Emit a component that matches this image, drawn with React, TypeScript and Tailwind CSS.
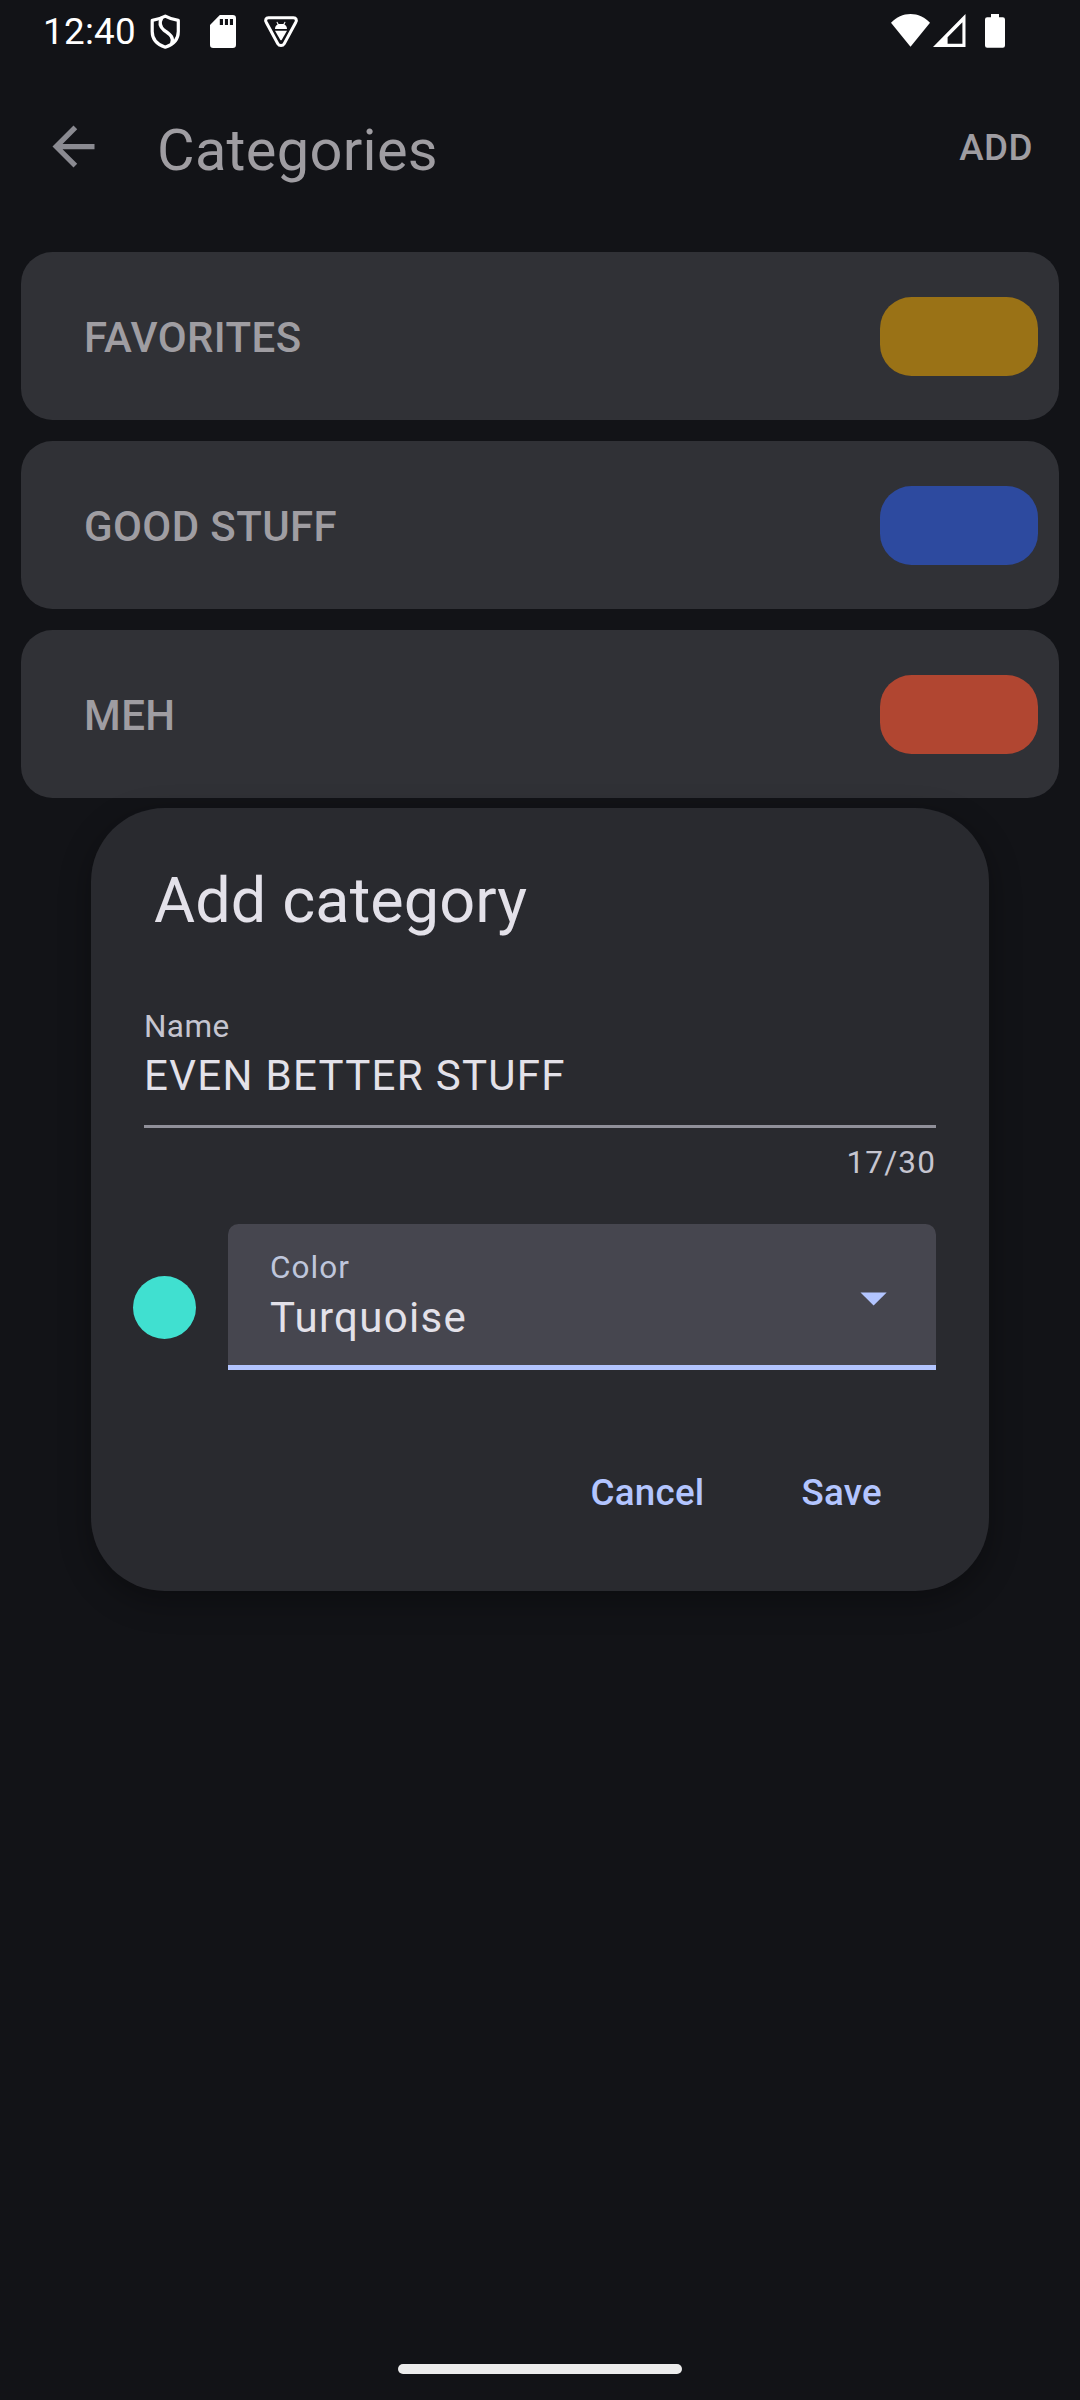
import type { ReactNode } from "react";

function ShieldIcon() {
  return (
    <svg className="h-[36px] w-[32px]" viewBox="0 0 32 36" fill="none" stroke="#fff" strokeLinejoin="round" strokeLinecap="round">
      <path d="M16.3 2.2 C12 4.6 7.5 5.9 3.2 6.4 V17.5 C3.2 25 8 30.6 16.3 33.2 C24.5 30.6 29.3 25 29.3 17.5 V6.4 C25 5.9 20.5 4.6 16.3 2.2 Z" strokeWidth="3.2" />
      <path d="M12.6 4.2 C10.2 8.5 10.5 12.5 15 16.2 C20.5 20.4 25 22.5 22.8 29" strokeWidth="3.4" />
    </svg>
  );
}

function SdCardIcon() {
  return (
    <svg className="h-[33px] w-[26px]" viewBox="0 0 26 33">
      <path
        fill="#fff"
        fillRule="evenodd"
        d="M9.8 0 H22.8 Q26 0 26 3.2 V29.8 Q26 33 22.8 33 H3.2 Q0 33 0 29.8 V9.9 Z M9.8 4 V10 H13 V4 Z M14.9 4 V10 H18 V4 Z M19.9 4 V10 H23 V4 Z"
      />
    </svg>
  );
}

function DebugTriangleIcon() {
  return (
    <svg className="h-[33px] w-[36px]" viewBox="0 0 36 33">
      <path d="M5.5 2.8 H30.5 C33.2 2.8 34 4.8 32.8 7.2 L21.2 28.8 C19.7 31.2 16.3 31.2 14.8 28.8 L3.2 7.2 C2 4.8 2.8 2.8 5.5 2.8 Z" fill="none" stroke="#fff" strokeWidth="3" />
      <path d="M12 14 C12 11.8 13 10.3 14.6 9.5 L13.4 7.1 L14.3 6.7 L15.6 9 H20.4 L21.7 6.7 L22.6 7.1 L21.4 9.5 C23 10.3 24 11.8 24 14 Z" fill="#fff" />
      <path d="M12 15.8 H24 L18.8 24.7 Q18 25.9 17.2 24.7 Z" fill="#fff" />
    </svg>
  );
}

function WifiIcon() {
  return (
    <svg className="h-[33px] w-[39px]" viewBox="0 0 39 33">
      <path fill="#fff" d="M19.5 32.8 L0 8.8 C5.5 3 12 0 19.5 0 C27 0 33.5 3 39 8.8 Z" />
    </svg>
  );
}

function SignalIcon() {
  return (
    <svg className="h-[33px] w-[33px]" viewBox="0 0 33 33">
      <path fill="#fff" fillRule="evenodd" d="M32.5 0 V33 H0 Z M29.4 8.2 L14.6 23.2 V29.7 H29.4 Z" />
    </svg>
  );
}

function BatteryIcon() {
  return (
    <svg className="h-[34px] w-5" viewBox="0 0 20 34">
      <path fill="#fff" d="M6 0 H14 V3.3 H17.8 Q20 3.3 20 5.5 V31.6 Q20 33.8 17.8 33.8 H2.2 Q0 33.8 0 31.6 V5.5 Q0 3.3 2.2 3.3 H6 Z" />
    </svg>
  );
}

function StatusBar() {
  return (
    <div className="flex h-[73px] items-start justify-between pt-[14px] pr-[75px] pl-[43px] text-white">
      <div className="flex items-start">
        <span className="w-[106px] text-[36.75px] leading-[36px] tracking-[0.3px]">12:40</span>
        <ShieldIcon />
        <span className="mt-px ml-[29px]"><SdCardIcon /></span>
        <span className="mt-px ml-[27px]"><DebugTriangleIcon /></span>
      </div>
      <div className="flex items-start">
        <WifiIcon />
        <span className="ml-[3px]"><SignalIcon /></span>
        <span className="ml-[19px]"><BatteryIcon /></span>
      </div>
    </div>
  );
}

function Header() {
  return (
    <header className="flex h-[147px] items-center pr-[47px] pl-[42px]">
      <svg className="size-[63px]" viewBox="0 0 24 24" fill="#8a8a91">
        <path d="M20 11H7.83l5.59-5.59L12 4l-8 8 8 8 1.41-1.41L7.83 13H20z" />
      </svg>
      <h1 className="mt-[7px] ml-[52px] text-[57.75px] leading-[70px] tracking-[0.3px] text-[#9f9da2]">Categories</h1>
      <button className="mt-[3px] ml-auto text-[36.75px] leading-[42px] font-medium tracking-[0.5px] text-[#9f9da2]">ADD</button>
    </header>
  );
}

function CategoryCard({ name, swatch }: { name: string; swatch: string }) {
  return (
    <li className="flex h-[168px] items-center justify-between rounded-[31.5px] bg-[#303136] pr-[21px] pl-[63px]">
      <span className="mt-[3px] text-[42px] leading-[50px] font-medium tracking-[0.4px] text-[#9f9da2]">{name}</span>
      <span className={`h-[79px] w-[158px] rounded-[31.5px] ${swatch}`} />
    </li>
  );
}

function DialogButton({ children }: { children: ReactNode }) {
  return <button className="text-[36.75px] leading-[44px] font-medium tracking-[0.26px] text-[#b3c5ff]">{children}</button>;
}

function AddCategoryDialog() {
  return (
    <div className="absolute top-[808px] left-[91px] flex h-[783px] w-[898px] flex-col rounded-[73.5px] bg-[#292a2f] pr-[53px] pl-[42px] shadow-[0_10px_32px_rgba(0,0,0,0.32)]">
      <h2 className="mt-[53px] ml-[21px] text-[63px] leading-[80px] tracking-[0.1px] text-[#e3e1e9]">Add category</h2>
      <div className="mt-[64px] ml-[11px] flex flex-col">
        <label className="text-[31.5px] leading-[44px] tracking-[0.4px] text-[#c6c5d0]">Name</label>
        <div className="h-[79px] border-b-[3px] border-[#90909a] pt-[2px] text-[42px] leading-[50px] tracking-[1.31px] text-[#e3e1e9]">EVEN BETTER STUFF</div>
        <div className="mt-[13px] self-end text-[31.5px] leading-[44px] tracking-[1.15px] text-[#c6c5d0]">17/30</div>
      </div>
      <div className="mt-[39px] flex h-[146px] items-start">
        <span className="mt-[52px] size-[63px] rounded-full bg-[#40e0d0]" />
        <div className="ml-[32px] flex h-[146px] flex-1 items-start justify-between rounded-t-[10.5px] border-b-[5px] border-[#b3c5ff] bg-[#46464f] pr-[49px] pl-[42px]">
          <div className="flex flex-col pt-[22px]">
            <span className="text-[31.5px] leading-[44px] tracking-[1.05px] text-[#bfc6dc]">Color</span>
            <span className="mt-[3px] text-[42px] leading-[50px] tracking-[1.31px] text-[#e3e1e9]">Turquoise</span>
          </div>
          <svg className="mt-[68px] h-[14px] w-[27px]" viewBox="0 0 27 14" fill="#b3c5ff">
            <path d="M0.5 0.4 H26.7 L13.6 13.5 Z" />
          </svg>
        </div>
      </div>
      <div className="mt-[101px] mr-[54px] flex justify-end gap-[97px]">
        <DialogButton>Cancel</DialogButton>
        <DialogButton>Save</DialogButton>
      </div>
    </div>
  );
}

const categories = [
  { name: "FAVORITES", swatch: "bg-[#9a7216]" },
  { name: "GOOD STUFF", swatch: "bg-[#2d4a9f]" },
  { name: "MEH", swatch: "bg-[#b14631]" },
];

export default function App() {
  return (
    <div className="relative flex h-[2400px] w-[1080px] flex-col overflow-hidden bg-[#121317] font-[Roboto,sans-serif]">
      <StatusBar />
      <Header />
      <ul className="mt-[32px] flex flex-col gap-[21px] px-[21px]">
        {categories.map((c) => (
          <CategoryCard key={c.name} name={c.name} swatch={c.swatch} />
        ))}
      </ul>
      <div className="mt-auto mb-[26px] h-[10px] w-[284px] self-center rounded-full bg-[#ececec]" />
      <AddCategoryDialog />
    </div>
  );
}
